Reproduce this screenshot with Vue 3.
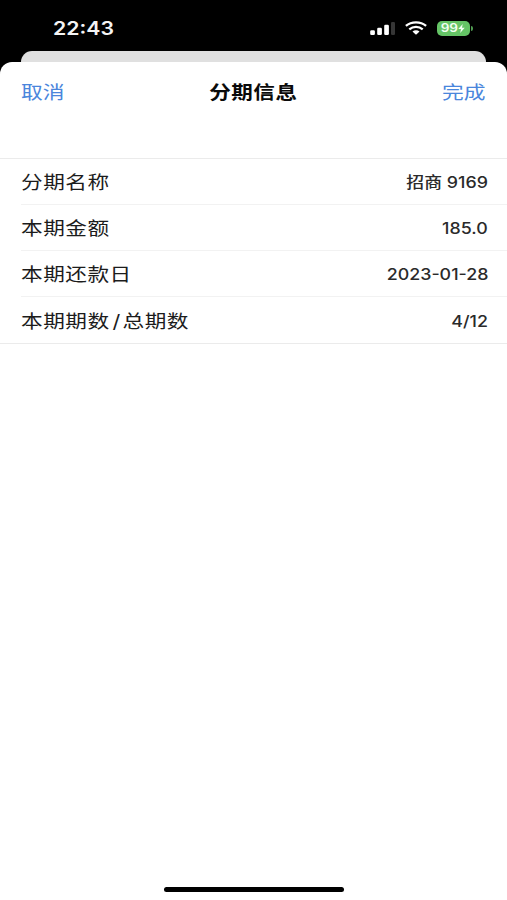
<template>
	<div class="screen">
		<div class="status-bar">
			<span class="time">22:43</span>
			<div class="status-icons">
				<svg class="signal" width="26" height="15" viewBox="0 0 26 15">
					<rect x="1.2" y="9.3" width="4.7" height="4.7" rx="1.3" fill="#fff" />
					<rect x="8.2" y="6.8" width="4.7" height="7.2" rx="1.3" fill="#fff" />
					<rect x="15.2" y="3.8" width="4.7" height="10.2" rx="1.3" fill="#fff" />
					<rect x="22" y="1" width="4" height="13" rx="1.3" fill="#363636" />
				</svg>
				<svg class="wifi" width="22" height="14" viewBox="0 0 22 14">
					<g fill="none" stroke="#fff" stroke-width="2.3">
						<path d="M.9 4.9C6.5.1 15.5.1 21.1 4.9" />
						<path d="M4.3 8.3C8.2 5 13.8 5 17.7 8.3" />
					</g>
					<path d="M7.5 10.6C9.5 8.9 12.5 8.9 14.5 10.6L11.6 13.2Q11 13.6 10.4 13.2Z" fill="#fff" />
				</svg>
				<div class="battery">
					<span class="level">99</span>
					<svg class="bolt" width="7" height="9" viewBox="0 0 7 9">
						<path d="M4.7 0L.3 5H3L2.2 9L6.7 3.8H4Z" fill="#f2fff2" />
					</svg>
				</div>
			</div>
		</div>
		<div class="sheet-back"></div>
		<div class="sheet">
			<div class="nav">
				<button class="left">取消</button>
				<h1>分期信息</h1>
				<button class="right">完成</button>
			</div>
			<ul class="list">
				<li v-for="row in rows" :key="row.value">
					<span class="label">{{ row.label }}<template v-if="row.total"><span class="slash">/</span>{{ row.total }}</template></span>
					<span class="value">{{ row.value }}</span>
				</li>
			</ul>
			<div class="home-indicator"></div>
		</div>
	</div>
</template>

<script setup>
import { ref } from 'vue'

const rows = ref([
	{ label: '分期名称', value: '招商 9169' },
	{ label: '本期金额', value: '185.0' },
	{ label: '本期还款日', value: '2023-01-28' },
	{ label: '本期期数', total: '总期数', value: '4/12' }
])
</script>

<style>
body {
	margin: 0;
	background: #000;
}
</style>

<style scoped>
.screen {
	display: flex;
	flex-direction: column;
	height: 900px;
	background: #000;
	overflow: hidden;
	font-family: Inter, 'Noto Sans CJK SC', sans-serif;
}

.status-bar {
	display: flex;
	justify-content: space-between;
	height: 51px;
	box-sizing: border-box;
	padding: 0 34px 0 53px;
}

.time {
	margin-top: 17px;
	color: #f4f4f4;
	font-size: 18px;
	line-height: 24px;
	font-weight: 600;
	transform: scaleX(1.18);
	transform-origin: left;
}

.status-icons {
	display: flex;
	height: 15px;
	margin-top: 21px;
}

.wifi {
	margin-left: 10px;
}

.battery {
	position: relative;
	display: flex;
	align-items: center;
	justify-content: center;
	width: 33px;
	height: 15px;
	margin: 0 3px 0 10px;
	border-radius: 5px;
	background: #65c466;
}

.battery::after {
	content: '';
	position: absolute;
	right: -3px;
	top: 5px;
	width: 2px;
	height: 5px;
	border-radius: 0 2px 2px 0;
	background: #4f9a50;
}

.level {
	color: #f2fff2;
	font-size: 11.5px;
	line-height: 15px;
	font-weight: 600;
	transform: scaleX(1.18);
}

.bolt {
	margin-left: 2px;
}

.sheet-back {
	height: 11px;
	margin: 0 21px;
	border-radius: 11px 11px 0 0;
	background: #e0e0e0;
}

.sheet {
	display: flex;
	flex: 1;
	flex-direction: column;
	border-radius: 12px 12px 0 0;
	background: #fff;
}

.nav {
	display: grid;
	grid-template-columns: 1fr auto 1fr;
	align-items: center;
	height: 57px;
	padding: 0 21px;
}

h1 {
	margin: 0;
	color: #0a0a0a;
	font-size: 18.3px;
	font-weight: 600;
	letter-spacing: .4px;
	transform: scaleX(1.18);
}

button {
	padding: 0;
	border: none;
	background: none;
	color: #4a86dc;
	font-family: inherit;
	font-size: 18.3px;
}

.left {
	justify-self: start;
	transform: scaleX(1.19);
	transform-origin: left;
}

.right {
	justify-self: end;
	transform: scaleX(1.19);
	transform-origin: right;
}

.list {
	margin: 39px 0 0;
	padding: 0;
	border-top: 1px solid #ebebeb;
	border-bottom: 1px solid #ebebeb;
	list-style: none;
}

li {
	display: flex;
	align-items: center;
	justify-content: space-between;
	height: 46.1px;
	box-sizing: border-box;
	margin-left: 21px;
	padding-right: 19px;
	border-bottom: 1px solid #f2f2f2;
}

li:last-child {
	border-bottom: none;
}

.label {
	margin-bottom: 1.5px;
	color: #1c1c1c;
	font-size: 18.3px;
	letter-spacing: .4px;
	transform: scaleX(1.185);
	transform-origin: left;
}

.slash {
	margin: 0 1.5px 0 2.5px;
}

.value {
	margin-top: 2px;
	color: #2a2a2a;
	font-size: 15.5px;
	font-weight: 500;
	transform: scaleX(1.15);
	transform-origin: right;
}

/* the CJK fallback makes this line box taller */
li:first-child .value {
	margin-top: 0;
	margin-bottom: 2px;
}

.home-indicator {
	width: 180px;
	height: 5px;
	margin: auto auto 8px;
	border-radius: 3px;
	background: #000;
}
</style>
